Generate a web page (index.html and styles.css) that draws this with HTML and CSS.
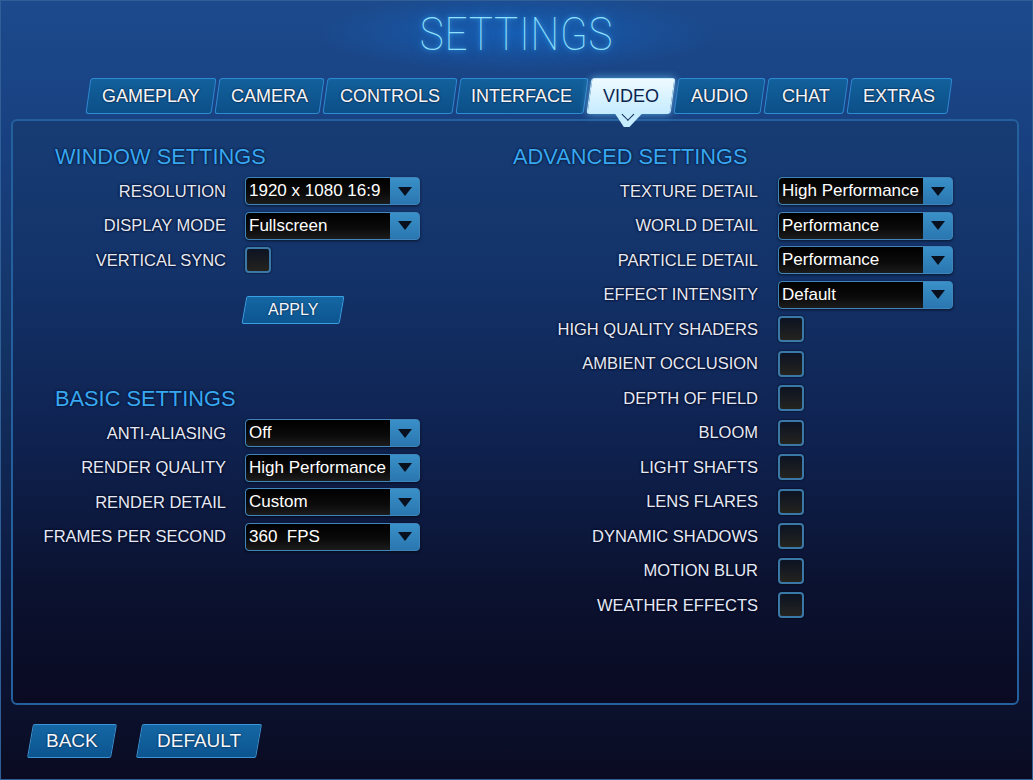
FILE: index.html
```html
<!DOCTYPE html>
<html lang="en">
<head>
    <meta charset="UTF-8">
    <title>Settings - Video</title>
    <link rel="stylesheet" href="styles.css">
</head>
<body>
    <div class="screen">
        <header class="title-bar">
            <h1 class="title">SETTINGS</h1>
        </header>

        <nav class="tabs">
            <a class="tab w-gameplay"><span>GAMEPLAY</span></a>
            <a class="tab w-camera"><span>CAMERA</span></a>
            <a class="tab w-controls"><span>CONTROLS</span></a>
            <a class="tab w-interface"><span>INTERFACE</span></a>
            <a class="tab w-video active"><span>VIDEO</span></a>
            <a class="tab w-audio"><span>AUDIO</span></a>
            <a class="tab w-chat"><span>CHAT</span></a>
            <a class="tab w-extras"><span>EXTRAS</span></a>
        </nav>

        <main class="panel">
            <section class="col col-left">
                <h2 class="heading">WINDOW SETTINGS</h2>
                <div class="rows">
                    <label class="label">RESOLUTION</label>
                    <div class="select"><span class="value">1920 x 1080 16:9</span><span class="arrow"></span></div>
                    <label class="label">DISPLAY MODE</label>
                    <div class="select"><span class="value">Fullscreen</span><span class="arrow"></span></div>
                    <label class="label">VERTICAL SYNC</label>
                    <div class="check"></div>
                </div>
                <div class="apply-row">
                    <button class="btn btn-apply"><span>APPLY</span></button>
                </div>

                <h2 class="heading heading-basic">BASIC SETTINGS</h2>
                <div class="rows">
                    <label class="label">ANTI-ALIASING</label>
                    <div class="select"><span class="value">Off</span><span class="arrow"></span></div>
                    <label class="label">RENDER QUALITY</label>
                    <div class="select"><span class="value">High Performance</span><span class="arrow"></span></div>
                    <label class="label">RENDER DETAIL</label>
                    <div class="select"><span class="value">Custom</span><span class="arrow"></span></div>
                    <label class="label">FRAMES PER SECOND</label>
                    <div class="select"><span class="value">360&nbsp; FPS</span><span class="arrow"></span></div>
                </div>
            </section>

            <section class="col col-right">
                <h2 class="heading">ADVANCED SETTINGS</h2>
                <div class="rows rows-wide">
                    <label class="label">TEXTURE DETAIL</label>
                    <div class="select"><span class="value">High Performance</span><span class="arrow"></span></div>
                    <label class="label">WORLD DETAIL</label>
                    <div class="select"><span class="value">Performance</span><span class="arrow"></span></div>
                    <label class="label">PARTICLE DETAIL</label>
                    <div class="select"><span class="value">Performance</span><span class="arrow"></span></div>
                    <label class="label">EFFECT INTENSITY</label>
                    <div class="select"><span class="value">Default</span><span class="arrow"></span></div>
                    <label class="label">HIGH QUALITY SHADERS</label>
                    <div class="check"></div>
                    <label class="label">AMBIENT OCCLUSION</label>
                    <div class="check"></div>
                    <label class="label">DEPTH OF FIELD</label>
                    <div class="check"></div>
                    <label class="label">BLOOM</label>
                    <div class="check"></div>
                    <label class="label">LIGHT SHAFTS</label>
                    <div class="check"></div>
                    <label class="label">LENS FLARES</label>
                    <div class="check"></div>
                    <label class="label">DYNAMIC SHADOWS</label>
                    <div class="check"></div>
                    <label class="label">MOTION BLUR</label>
                    <div class="check"></div>
                    <label class="label">WEATHER EFFECTS</label>
                    <div class="check"></div>
                </div>
            </section>
        </main>

        <footer class="actions">
            <button class="btn btn-back"><span>BACK</span></button>
            <button class="btn btn-default"><span>DEFAULT</span></button>
        </footer>
    </div>
</body>
</html>
```

FILE: styles.css
```css
body {
    margin: 0;
    padding: 0;
    background: #0a0b20;
    font-family: 'Liberation Sans', Arial, sans-serif;
}

.screen {
    width: 1033px;
    height: 780px;
    box-sizing: border-box;
    border: 1px solid #2f5f96;
    overflow: hidden;
    background: linear-gradient(to bottom, #1c4a8c 0%, #184080 18%, #133264 45%, #0d1a40 75%, #0a0b21 100%);
}

/* title */
.title-bar {
    height: 77px;
    display: flex;
    justify-content: center;
    background: radial-gradient(ellipse 200px 40px at 50% 32px, rgba(20, 110, 210, 0.55), rgba(20, 110, 210, 0) 100%);
}

.title {
    margin: 0;
    padding-top: 7px;
    font-family: 'Roboto', 'Liberation Sans', sans-serif;
    font-weight: 100;
    font-size: 47px;
    line-height: 52px;
    letter-spacing: 1px;
    color: #8fe0ff;
    text-shadow: 0 0 6px rgba(60, 180, 255, 0.9), 0 0 14px rgba(40, 150, 255, 0.6);
    transform: scaleX(0.86);
}

/* tabs */
.tabs {
    display: flex;
    gap: 3px;
    padding-left: 87px;
    height: 36px;
    margin-bottom: 5px;
}

.tab {
    position: relative;
    height: 36px;
    box-sizing: border-box;
    display: flex;
    align-items: center;
    justify-content: center;
    background: linear-gradient(to bottom, #12609c, #0c4f88);
    border: 1px solid #2e8ad2;
    border-radius: 3px;
    transform: skewX(-8deg);
    color: #f2f6ff;
    font-size: 18px;
    text-shadow: 0 0 2px #02122a, 0 0 1px #02122a, 0 0 0.4px #fff;
}

.tab span {
    transform: skewX(8deg);
    padding-top: 1px;
}

.tab.active {
    background: linear-gradient(to bottom, #eefaff, #c6ecff);
    border-color: #bfeaff;
    color: #0a2550;
    text-shadow: none;
    box-shadow: 0 0 8px rgba(120, 210, 255, 0.7);
}

.tab.active::after {
    content: "";
    position: absolute;
    left: 50%;
    bottom: -14px;
    width: 28px;
    height: 14px;
    margin-left: -14px;
    background: #c6ecff;
    clip-path: polygon(0 0, 100% 0, 60% 100%, 40% 100%);
}

.tab.active::before {
    content: "";
    position: absolute;
    left: 50%;
    bottom: -6px;
    width: 8px;
    height: 8px;
    margin-left: -5px;
    border-right: 1.5px solid #0a2550;
    border-bottom: 1.5px solid #0a2550;
    transform: skewX(8deg) rotate(45deg);
    z-index: 2;
}

.w-gameplay { width: 126px; }
.w-camera { width: 105px; }
.w-controls { width: 130px; }
.w-interface { width: 128px; }
.w-video { width: 84px; }
.w-audio { width: 87px; }
.w-chat { width: 80px; }
.w-extras { width: 101px; }

/* main panel */
.panel {
    height: 586px;
    margin: 0 13px 0 10px;
    box-sizing: border-box;
    border: 2px solid #245f9e;
    border-radius: 6px;
    background: linear-gradient(to bottom, #173c74 0%, #13336a 25%, #0f2250 55%, #0b1230 80%, #0a0a22 100%);
    display: flex;
    padding: 24px 0 0 17px;
}

.col-left {
    width: 390px;
}

.col-right {
    margin-left: 93px;
}

.heading {
    margin: 0 0 5px 0;
    height: 24px;
    line-height: 24px;
    font-size: 21.8px;
    font-weight: normal;
    color: #38a8f2;
    text-shadow: 0 0 3px #04102a, 0 0 1px #04102a;
}

.col-left .heading {
    margin-left: 25px;
}

.heading-basic {
    margin-top: 63px;
}

.rows {
    display: grid;
    grid-template-columns: 196px 175px;
    column-gap: 19px;
    grid-auto-rows: 34.5px;
    align-items: center;
}

.rows-wide {
    grid-template-columns: 245px 175px;
    column-gap: 20px;
}

.label {
    text-align: right;
    font-size: 16.5px;
    color: #e6eaf6;
    text-shadow: 0 0 3px #000820, 0 0 2px #000820;
    white-space: nowrap;
}

/* dropdowns */
.select {
    height: 28px;
    box-sizing: border-box;
    display: flex;
    border: 1px solid #3f84ba;
    border-radius: 4px;
    background: #2f80bb;
    box-shadow: 0 1px 3px rgba(0, 0, 0, 0.6);
    overflow: hidden;
}

.select .value {
    flex: 1;
    background: linear-gradient(to bottom, #000 0%, #0b0b0b 60%, #1c1c1c 100%);
    border-radius: 3px 0 0 3px;
    color: #fff;
    font-size: 17px;
    line-height: 26px;
    padding-left: 3px;
    white-space: nowrap;
    overflow: hidden;
}

.select .arrow {
    width: 29px;
    display: flex;
    align-items: center;
    justify-content: center;
    background: linear-gradient(to bottom, #3a90c8, #2a76b0);
}

.select .arrow::after {
    content: "";
    border-left: 7px solid transparent;
    border-right: 7px solid transparent;
    border-top: 9px solid #08101e;
}

/* checkbox */
.check {
    width: 26px;
    height: 26px;
    box-sizing: border-box;
    border: 2px solid #3a78a8;
    border-radius: 4px;
    background: linear-gradient(to bottom, #0c1322, #24231f);
    box-shadow: 0 0 2px #000;
}

/* buttons */
.btn {
    height: 28px;
    padding: 0;
    box-sizing: border-box;
    background: linear-gradient(to bottom, #1467a4, #0c5590);
    border: 1px solid #3aa0e4;
    border-radius: 2px;
    transform: skewX(-10deg);
    color: #f4f8ff;
    font-family: 'Liberation Sans', Arial, sans-serif;
    font-size: 16px;
    text-shadow: 0 0 2px #02122a;
    cursor: pointer;
}

.btn span {
    display: inline-block;
    transform: skewX(10deg);
}

.apply-row {
    margin-top: 18.5px;
    padding-left: 214px;
}

.btn-apply {
    width: 98px;
}

.actions {
    display: flex;
    gap: 25px;
    padding: 19px 0 0 29px;
}

.btn-back,
.btn-default {
    height: 34px;
    font-size: 19px;
    border-color: #3b95d6;
}

.btn-back {
    width: 84px;
}

.btn-default {
    width: 120px;
}
```
